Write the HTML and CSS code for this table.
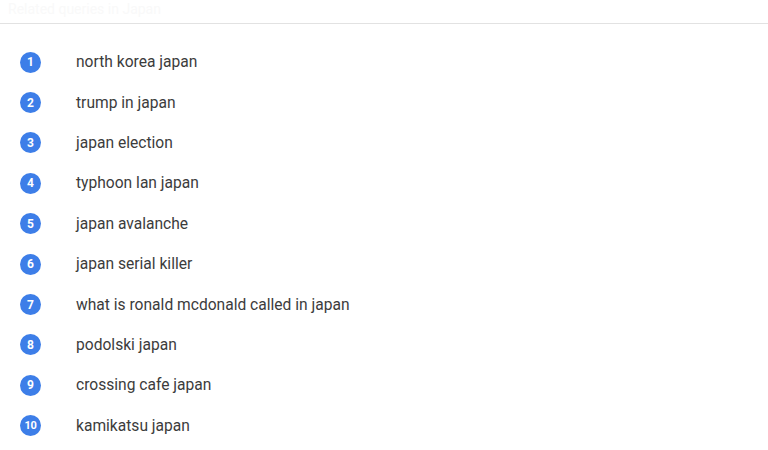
FILE: index.html
```html
<!DOCTYPE html>
<html>
<head>
<meta charset="utf-8">
<link rel="stylesheet" href="styles.css">
</head>
<body>
<div class="header"><span class="ghost">Related queries in Japan</span></div>
<ol class="list">
  <li class="row"><span class="badge">1</span><span class="text">north korea japan</span></li>
  <li class="row"><span class="badge">2</span><span class="text">trump in japan</span></li>
  <li class="row"><span class="badge">3</span><span class="text">japan election</span></li>
  <li class="row"><span class="badge">4</span><span class="text">typhoon lan japan</span></li>
  <li class="row"><span class="badge">5</span><span class="text">japan avalanche</span></li>
  <li class="row"><span class="badge">6</span><span class="text">japan serial killer</span></li>
  <li class="row"><span class="badge">7</span><span class="text">what is ronald mcdonald called in japan</span></li>
  <li class="row"><span class="badge">8</span><span class="text">podolski japan</span></li>
  <li class="row"><span class="badge">9</span><span class="text">crossing cafe japan</span></li>
  <li class="row"><span class="badge small">10</span><span class="text">kamikatsu japan</span></li>
</ol>
</body>
</html>
```
FILE: styles.css
```css
html, body {
  margin: 0;
  padding: 0;
  background: #ffffff;
  font-family: Roboto, "Liberation Sans", sans-serif;
}
.header {
  height: 23px;
  border-bottom: 1px solid #e2e2e2;
  padding-left: 8px;
  display: flex;
  align-items: flex-start;
}
.ghost {
  display: block;
  margin-top: 1px;
  font-size: 14px;
  line-height: 16px;
  color: #f9f9f9;
}
.list {
  list-style: none;
  margin: 0;
  padding: 18px 0 0 20px;
  display: flex;
  flex-direction: column;
}
.row {
  display: flex;
  align-items: center;
  height: 40.4px;
}
.badge {
  width: 21px;
  height: 21px;
  border-radius: 50%;
  background: #3d7ee8;
  color: #ffffff;
  font-size: 12px;
  font-weight: 700;
  display: flex;
  align-items: center;
  justify-content: center;
  flex: none;
}
.badge.small {
  font-size: 11px;
  letter-spacing: -0.3px;
}
.text {
  margin-left: 35px;
  font-size: 15.6px;
  color: #3c3c3c;
}
```
